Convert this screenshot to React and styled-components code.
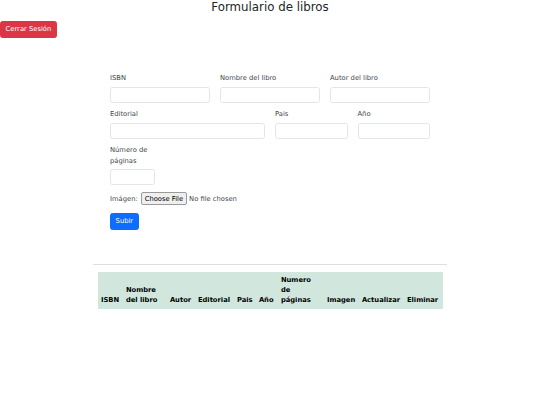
import React from "react";
import styled, { createGlobalStyle } from "styled-components";

const GlobalStyle = createGlobalStyle`
  body {
    margin: 0;
    background: #fff;
    color: #212529;
    font-family: "DejaVu Sans", sans-serif;
    font-size: 6.75px;
    line-height: 1.5;
  }
`;

const StyledPage = styled.div`
  width: 540px;
  min-height: 405px;
`;

const StyledTitle = styled.h3`
  margin: 0 0 6.8px;
  text-align: center;
  font-size: 11.8px;
  font-weight: 500;
  line-height: 1.2;
`;

const StyledButton = styled.button`
  display: inline-block;
  padding: 2.5px 4.6px;
  border: 0.84px solid ${({ $color }) => $color};
  border-radius: 2.5px;
  background: ${({ $color }) => $color};
  color: #fff;
  font-family: inherit;
  font-size: 6.75px;
  line-height: 1.5;
  cursor: pointer;
`;

const StyledForm = styled.form`
  width: 320px;
  margin: 35px auto 34.5px;
`;

const StyledGrid = styled.div`
  display: grid;
  grid-template-columns: repeat(12, 1fr);
  column-gap: 10px;
  row-gap: 6.7px;
  margin-bottom: 6.7px;
`;

const StyledField = styled.div`
  grid-column: span ${({ $span }) => $span};
  display: flex;
  flex-direction: column;
`;

const StyledLabel = styled.label`
  margin-bottom: 3.4px;
  color: #42474c;
  font-size: 6.75px;
  line-height: 1.5;
`;

const StyledInlineLabel = styled(StyledLabel)`
  margin: 0;
`;

const StyledInput = styled.input`
  box-sizing: border-box;
  width: 100%;
  height: 16px;
  padding: 2.5px 5px;
  border: 1px solid #e3e6e9;
  border-radius: 2.5px;
  font-family: inherit;
  font-size: 6.75px;
  outline: none;
`;

const StyledFileRow = styled.div`
  display: flex;
  align-items: center;
  gap: 3px;
  height: 14px;
  margin-bottom: 6.7px;
`;

const StyledFileInput = styled.input`
  font-family: "DejaVu Sans", sans-serif;
  font-size: 6.75px;
  color: #42474c;

  &::file-selector-button {
    margin-right: 2px;
    padding: 1.5px 3px;
    border: 1px solid #9a9a9a;
    border-radius: 2px;
    background: #efefef;
    color: #000;
    font-family: inherit;
    font-size: 6.75px;
  }
`;

const StyledDivider = styled.hr`
  width: 354px;
  margin: 6.7px auto;
  border: 0;
  border-top: 1px solid #dedfe0;
`;

const StyledTable = styled.table`
  width: 345px;
  margin: 0 auto;
  border-collapse: collapse;
  table-layout: fixed;
`;

const StyledTh = styled.th`
  box-sizing: border-box;
  width: ${({ $w }) => $w}px;
  padding: 3.4px;
  background: #d1e7dd;
  color: #000;
  font-size: 6.75px;
  font-weight: bold;
  line-height: 1.5;
  text-align: left;
  vertical-align: bottom;
  white-space: normal;
`;

const columns = [
  ["ISBN", 25],
  ["Nombre del libro", 44],
  ["Autor", 28],
  ["Editorial", 39],
  ["Pais", 22],
  ["Año", 22],
  ["Numero de páginas", 46],
  ["Imagen", 35],
  ["Actualizar", 45],
  ["Eliminar", 39],
];

const fields = [
  ["ISBN", 4],
  ["Nombre del libro", 4],
  ["Autor del libro", 4],
  ["Editorial", 6],
  ["Pais", 3],
  ["Año", 3],
  ["Número de páginas", 2],
];

const App = () => (
  <StyledPage>
    <GlobalStyle />
    <StyledTitle>Formulario de libros</StyledTitle>
    <StyledButton type="button" $color="#dc3545">
      Cerrar Sesión
    </StyledButton>

    <StyledForm onSubmit={(e) => e.preventDefault()}>
      <StyledGrid>
        {fields.map(([label, span]) => (
          <StyledField key={label} $span={span}>
            <StyledLabel>{label}</StyledLabel>
            <StyledInput type="text" />
          </StyledField>
        ))}
      </StyledGrid>
      <StyledFileRow>
        <StyledInlineLabel as="span">Imágen:</StyledInlineLabel>
        <StyledFileInput type="file" />
      </StyledFileRow>
      <StyledButton type="submit" $color="#0d6efd">
        Subir
      </StyledButton>
    </StyledForm>

    <StyledDivider />

    <StyledTable>
      <thead>
        <tr>
          {columns.map(([name, w]) => (
            <StyledTh key={name} $w={w}>
              {name}
            </StyledTh>
          ))}
        </tr>
      </thead>
      <tbody />
    </StyledTable>
  </StyledPage>
);

export default App;
